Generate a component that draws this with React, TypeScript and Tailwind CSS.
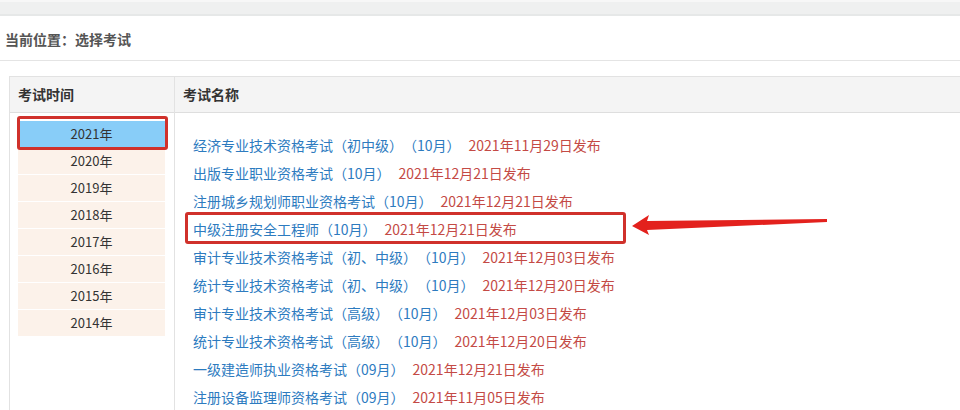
import React from "react";

const years = ["2021年", "2020年", "2019年", "2018年", "2017年", "2016年", "2015年", "2014年"];

const exams: { name: string; date: string }[] = [
  { name: "经济专业技术资格考试（初中级）（10月）", date: "2021年11月29日发布" },
  { name: "出版专业职业资格考试（10月）", date: "2021年12月21日发布" },
  { name: "注册城乡规划师职业资格考试（10月）", date: "2021年12月21日发布" },
  { name: "中级注册安全工程师（10月）", date: "2021年12月21日发布" },
  { name: "审计专业技术资格考试（初、中级）（10月）", date: "2021年12月03日发布" },
  { name: "统计专业技术资格考试（初、中级）（10月）", date: "2021年12月20日发布" },
  { name: "审计专业技术资格考试（高级）（10月）", date: "2021年12月03日发布" },
  { name: "统计专业技术资格考试（高级）（10月）", date: "2021年12月20日发布" },
  { name: "一级建造师执业资格考试（09月）", date: "2021年12月21日发布" },
  { name: "注册设备监理师资格考试（09月）", date: "2021年11月05日发布" },
];

export default function App() {
  return (
    <div
      className="relative w-[960px] h-[410px] overflow-hidden bg-white [text-spacing-trim:space-all]"
      style={{ fontFamily: '"Noto Sans CJK SC", "Microsoft YaHei", sans-serif' }}
    >
      {/* top grey bar */}
      <div className="h-[16px] border-t-[2px] border-t-[#f7f7f7] border-b-[2px] border-b-[#e6e8e8] bg-[#eff0f0]" />

      {/* breadcrumb */}
      <div className="h-[45px] border-b border-[#e4e4e4] flex items-center pl-[5px] pt-[3px]">
        <span className="text-[14px] font-bold text-[#555]">当前位置：选择考试</span>
      </div>

      {/* table */}
      <div className="mt-[15px] ml-[9px] border-l border-t border-[#e2e2e2] grid grid-cols-[165px_1fr] h-[400px]">
        {/* left column */}
        <div className="border-r border-[#e2e2e2] flex flex-col">
          <div className="h-[36px] bg-[#f4f4f4] border-b border-[#dedede] flex items-center pl-[8px]">
            <span className="text-[14px] font-bold text-[#333]">考试时间</span>
          </div>
          <div className="pt-[8px] pl-[8px] pr-[9px] flex flex-col gap-[1px]">
            {years.map((y, i) => (
              <div
                key={y}
                className={
                  i === 0
                    ? "h-[26px] bg-[#88cdf8] flex items-center justify-center text-[13px] text-[#333]"
                    : "h-[26px] bg-[#fcf2ea] flex items-center justify-center text-[13px] text-[#333]"
                }
              >
                {y}
              </div>
            ))}
          </div>
        </div>

        {/* right column */}
        <div className="flex flex-col">
          <div className="h-[36px] bg-[#f4f4f4] border-b border-[#dedede] flex items-center pl-[8px]">
            <span className="text-[14px] font-bold text-[#333]">考试名称</span>
          </div>
          <div className="pt-[18px] pl-[18px] flex flex-col">
            {exams.map((e, i) => (
              <div key={i} className="h-[28px] flex items-center text-[14px] whitespace-nowrap">
                <span className="text-[#2d7bbf]">{e.name}</span>
                <span className="ml-2 text-[#c44a45]">{e.date}</span>
              </div>
            ))}
          </div>
        </div>
      </div>

      {/* annotation: year box */}
      <div className="absolute left-[17px] top-[116px] w-[151px] h-[34px] border-[3px] border-[#d0312b] rounded-[3px]" />

      {/* annotation: exam box */}
      <div className="absolute left-[185px] top-[212px] w-[441px] h-[32px] border-[3px] border-[#d0312b] rounded-[3px]" />

      {/* annotation: arrow */}
      <svg className="absolute left-[628px] top-[210px]" width="202" height="32" viewBox="0 0 202 32">
        <polygon
          points="4,16 21,5 19,11 199,9 199,12 19,20 21,25"
          fill="#e3211d"
        />
      </svg>
    </div>
  );
}
